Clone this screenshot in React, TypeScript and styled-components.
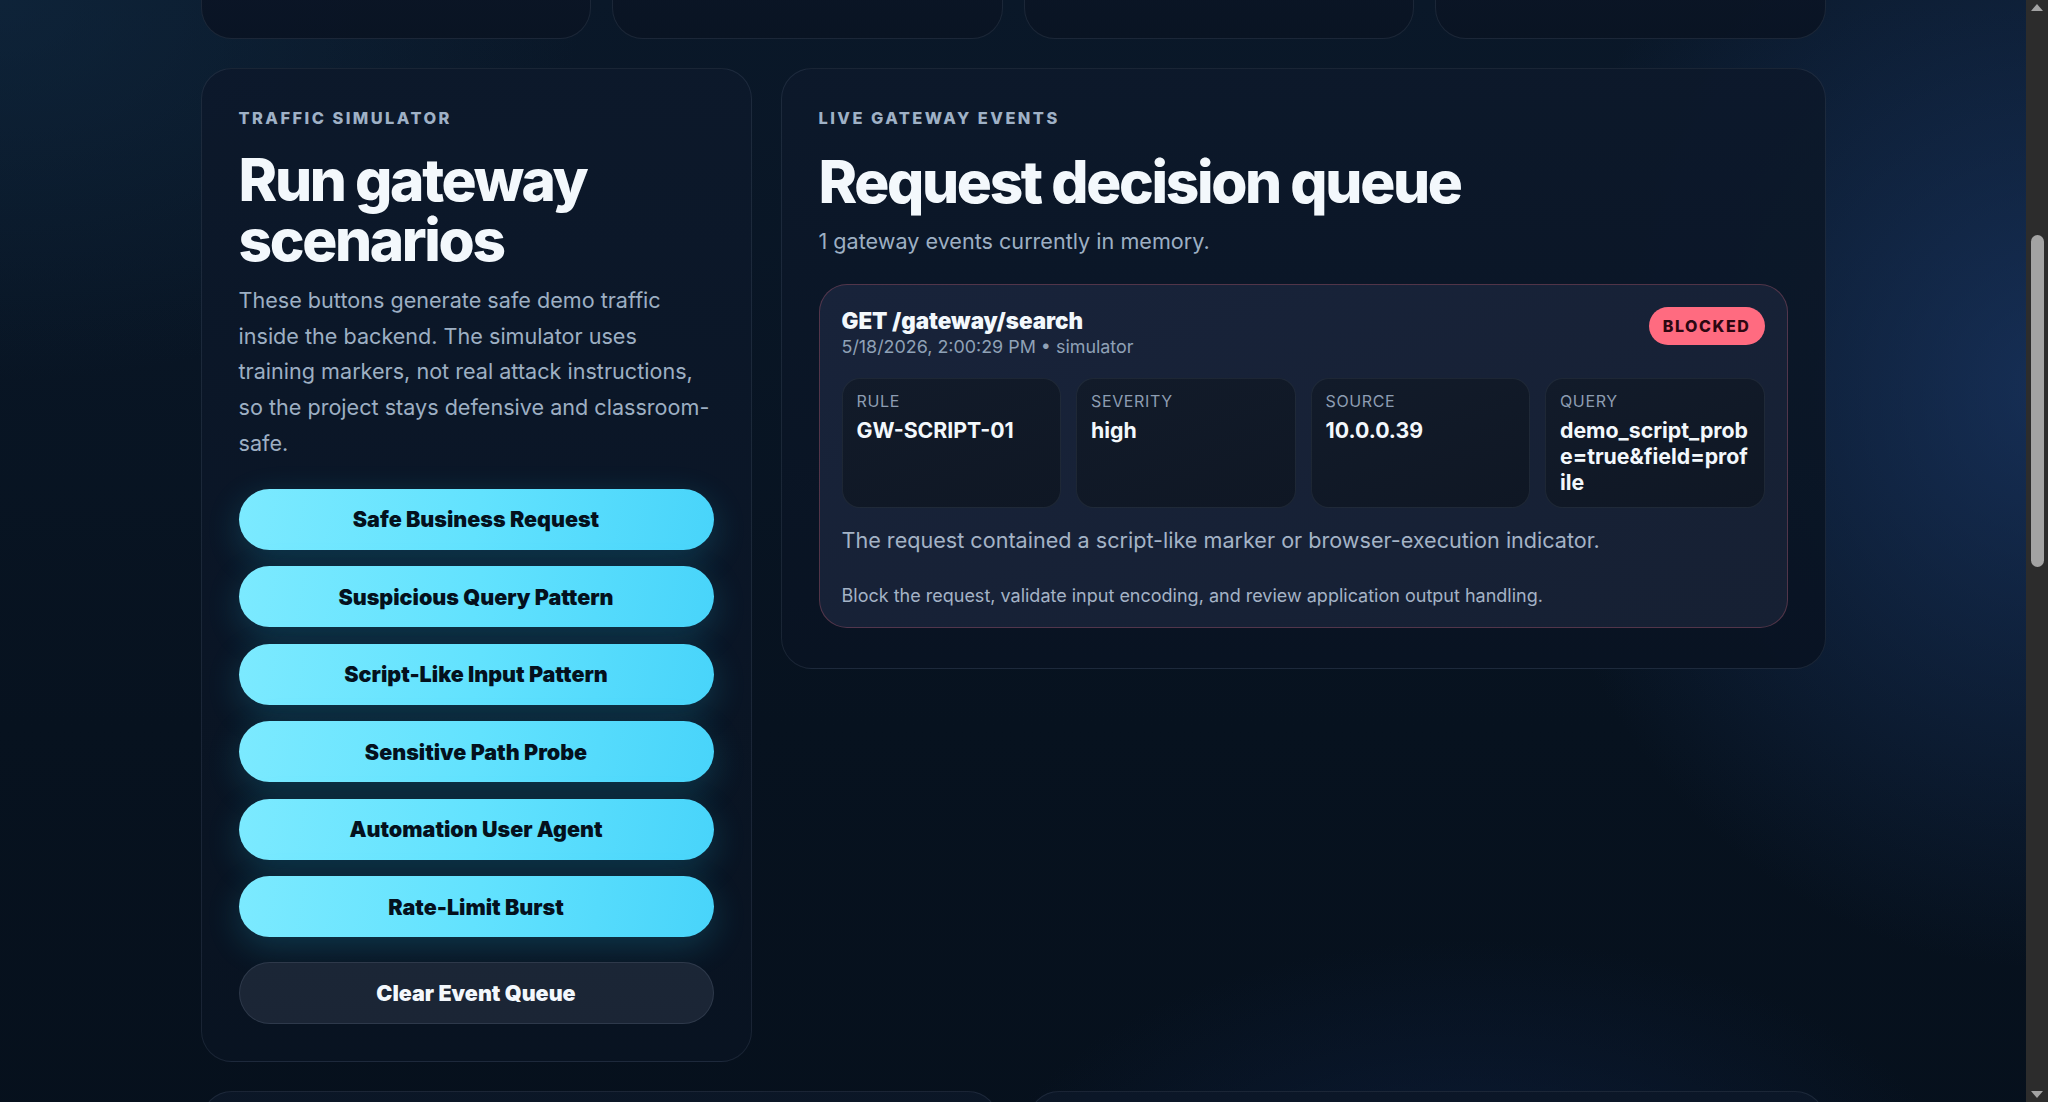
import React from "react";
import styled, { createGlobalStyle } from "styled-components";

const GlobalStyle = createGlobalStyle`
  html, body {
    margin: 0;
    padding: 0;
    background: #07111f;
  }
  body {
    font-family: Inter, "Noto Sans", "Liberation Sans", sans-serif;
    color: #f3f8fc;
    -webkit-font-smoothing: antialiased;
  }
  * { box-sizing: border-box; }
`;

const Shell = styled.div`
  display: grid;
  grid-template-columns: 1fr 22px;
  min-height: 100vh;
  background:
    radial-gradient(ellipse 32% 60% at 100% 32%, rgba(30, 62, 115, 0.62), transparent 80%),
    radial-gradient(ellipse 38% 42% at 0% 0%, rgba(18, 46, 72, 0.5), transparent 75%),
    radial-gradient(ellipse 30% 28% at 72% 100%, rgba(16, 36, 74, 0.55), transparent 80%),
    linear-gradient(180deg, #0a1829 0%, #07121f 60%, #06101c 100%);
`;

const Page = styled.main`
  width: 1625px;
  margin: 0 auto;
  display: flex;
  flex-direction: column;
  gap: 29px;
`;

const Rail = styled.div`
  position: sticky;
  top: 0;
  height: 100vh;
  background: #2c2c2c;
  display: flex;
  flex-direction: column;
  align-items: center;
`;

const RailArrow = styled.div<{ $down?: boolean }>`
  width: 0;
  height: 0;
  margin: ${(p) => (p.$down ? "auto 0 4px" : "4px 0 0")};
  border-left: 6px solid transparent;
  border-right: 6px solid transparent;
  ${(p) => (p.$down ? "border-top: 7px solid #a3a3a3;" : "border-bottom: 7px solid #a3a3a3;")}
`;

const RailThumb = styled.div`
  margin-top: 224px;
  width: 13px;
  height: 332px;
  border-radius: 7px;
  background: #a3a3a3;
`;

const StatsRow = styled.section`
  display: grid;
  grid-template-columns: repeat(4, 1fr);
  gap: 21px;
`;

const StatStub = styled.div`
  height: 39px;
  border-radius: 0 0 31px 31px;
  background: linear-gradient(180deg, rgba(11, 21, 37, 0.94), rgba(10, 20, 35, 0.94));
  border: 1px solid rgba(148, 163, 184, 0.13);
  border-top: none;
`;

const MainGrid = styled.section`
  display: grid;
  grid-template-columns: 551px 1fr;
  gap: 29px;
  align-items: start;
`;

const Panel = styled.div<{ $bottom: number }>`
  border-radius: 31px;
  padding: 38px 37px ${(p) => p.$bottom}px;
  background: linear-gradient(180deg, rgba(13, 25, 43, 0.94), rgba(9, 19, 34, 0.94));
  border: 1px solid rgba(148, 163, 184, 0.13);
  display: flex;
  flex-direction: column;
`;

const Eyebrow = styled.div`
  font-size: 16.4px;
  line-height: 23px;
  font-weight: 800;
  letter-spacing: 0.15em;
  text-transform: uppercase;
  color: #9fb1c6;
`;

const Title = styled.h2<{ $top: number; $lh: number }>`
  margin: ${(p) => p.$top}px 0 0;
  font-size: 58.5px;
  line-height: ${(p) => p.$lh}px;
  font-weight: 800;
  letter-spacing: -0.04em;
  color: #f3f8fc;
`;

const Lead = styled.p`
  margin: 13px 0 0;
  font-size: 21.6px;
  line-height: 35.7px;
  color: #9dafc3;
`;

const ButtonStack = styled.div`
  margin-top: 27px;
  display: flex;
  flex-direction: column;
  gap: 16.5px;
`;

const ScenarioButton = styled.button`
  height: 61px;
  border: none;
  border-radius: 999px;
  background: linear-gradient(100deg, #7ceaff 0%, #62e2fe 50%, #48d4fa 100%);
  box-shadow: 0 10px 34px rgba(34, 200, 238, 0.2);
  font-family: Inter, "Noto Sans", sans-serif;
  font-size: 21.5px;
  font-weight: 900;
  color: #04111d;
  cursor: pointer;
`;

const ClearButton = styled.button`
  margin-top: 8px;
  height: 62px;
  border: 1px solid rgba(148, 163, 184, 0.16);
  border-radius: 999px;
  background: linear-gradient(180deg, #1b2636, #1b2535);
  font-family: Inter, "Noto Sans", sans-serif;
  font-size: 21.5px;
  font-weight: 900;
  color: #f3f8fc;
  cursor: pointer;
`;

const Subtitle = styled.p`
  margin: 11px 0 0;
  font-size: 21.6px;
  line-height: 33.6px;
  color: #9dafc3;
`;

const EventCard = styled.article`
  margin-top: 25px;
  border-radius: 28px;
  padding: 22px 22px 19px;
  background: linear-gradient(160deg, #18233a 0%, #162033 100%);
  border: 1px solid rgba(251, 113, 133, 0.26);
  display: flex;
  flex-direction: column;
`;

const EventHeader = styled.div`
  display: flex;
  justify-content: space-between;
  align-items: flex-start;
`;

const EventTitle = styled.div`
  font-size: 22.4px;
  line-height: 27.3px;
  font-weight: 900;
  color: #f3f8fc;
`;

const EventMeta = styled.div`
  font-size: 17.9px;
  line-height: 25.6px;
  color: #8fa1b6;
`;

const Badge = styled.span`
  height: 38px;
  padding: 0 14px;
  border-radius: 999px;
  background: #ff6b80;
  color: #2c0711;
  font-size: 16px;
  font-weight: 800;
  letter-spacing: 0.1em;
  display: inline-flex;
  align-items: center;
`;

const MetaGrid = styled.div`
  margin-top: 19px;
  display: grid;
  grid-template-columns: repeat(4, 1fr);
  gap: 15px;
`;

const MetaCell = styled.div`
  border-radius: 18px;
  padding: 12px 11px 12px 14px;
  background: linear-gradient(160deg, #121b2a, #0f1724);
  border: 1px solid rgba(148, 163, 184, 0.11);
  display: flex;
  flex-direction: column;
  min-width: 0;
`;

const MetaLabel = styled.span`
  font-size: 16px;
  line-height: 21.2px;
  letter-spacing: 0.04em;
  text-transform: uppercase;
  color: #8d9db2;
`;

const MetaValue = styled.span`
  margin-top: 4px;
  font-size: 21.3px;
  line-height: 26px;
  font-weight: 700;
  color: #f3f8fc;
  word-break: break-all;
`;

const Reason = styled.p`
  margin: 16px 0 0;
  font-size: 21.6px;
  line-height: 33.6px;
  color: #a4b3c6;
`;

const Advice = styled.p`
  margin: 27px 0 0;
  font-size: 18px;
  line-height: 23.4px;
  color: #a4b3c6;
`;

const LowerRow = styled.section`
  display: grid;
  grid-template-columns: 1fr 1fr;
  gap: 29px;
`;

const LowerCard = styled.div`
  height: 120px;
  border-radius: 31px 31px 0 0;
  background: linear-gradient(180deg, rgba(12, 23, 40, 0.94), rgba(10, 20, 35, 0.94));
  border: 1px solid rgba(148, 163, 184, 0.13);
  border-bottom: none;
`;

const scenarios = [
  "Safe Business Request",
  "Suspicious Query Pattern",
  "Script-Like Input Pattern",
  "Sensitive Path Probe",
  "Automation User Agent",
  "Rate-Limit Burst",
];

const meta = [
  { label: "Rule", value: "GW-SCRIPT-01" },
  { label: "Severity", value: "high" },
  { label: "Source", value: "10.0.0.39" },
  { label: "Query", value: "demo_script_probe=true&field=profile" },
];

export default function App() {
  return (
    <>
      <GlobalStyle />
      <Shell>
        <Page>
          <StatsRow>
            {[0, 1, 2, 3].map((i) => (
              <StatStub key={i} />
            ))}
          </StatsRow>

          <MainGrid>
            <Panel $bottom={37}>
              <Eyebrow>Traffic Simulator</Eyebrow>
              <Title $top={20} $lh={60}>
                Run gateway scenarios
              </Title>
              <Lead>
                These buttons generate safe demo traffic inside the backend. The simulator uses
                training markers, not real attack instructions, so the project stays defensive and
                classroom-safe.
              </Lead>
              <ButtonStack>
                {scenarios.map((s) => (
                  <ScenarioButton key={s} type="button">
                    {s}
                  </ScenarioButton>
                ))}
                <ClearButton type="button">Clear Event Queue</ClearButton>
              </ButtonStack>
            </Panel>

            <Panel $bottom={40}>
              <Eyebrow>Live Gateway Events</Eyebrow>
              <Title $top={19} $lh={65}>
                Request decision queue
              </Title>
              <Subtitle>1 gateway events currently in memory.</Subtitle>

              <EventCard>
                <EventHeader>
                  <div>
                    <EventTitle>GET /gateway/search</EventTitle>
                    <EventMeta>5/18/2026, 2:00:29 PM • simulator</EventMeta>
                  </div>
                  <Badge>BLOCKED</Badge>
                </EventHeader>
                <MetaGrid>
                  {meta.map((m) => (
                    <MetaCell key={m.label}>
                      <MetaLabel>{m.label}</MetaLabel>
                      <MetaValue>{m.value}</MetaValue>
                    </MetaCell>
                  ))}
                </MetaGrid>
                <Reason>
                  The request contained a script-like marker or browser-execution indicator.
                </Reason>
                <Advice>
                  Block the request, validate input encoding, and review application output
                  handling.
                </Advice>
              </EventCard>
            </Panel>
          </MainGrid>

          <LowerRow>
            <LowerCard />
            <LowerCard />
          </LowerRow>
        </Page>
        <Rail aria-hidden="true">
          <RailArrow />
          <RailThumb />
          <RailArrow $down />
        </Rail>
      </Shell>
    </>
  );
}
